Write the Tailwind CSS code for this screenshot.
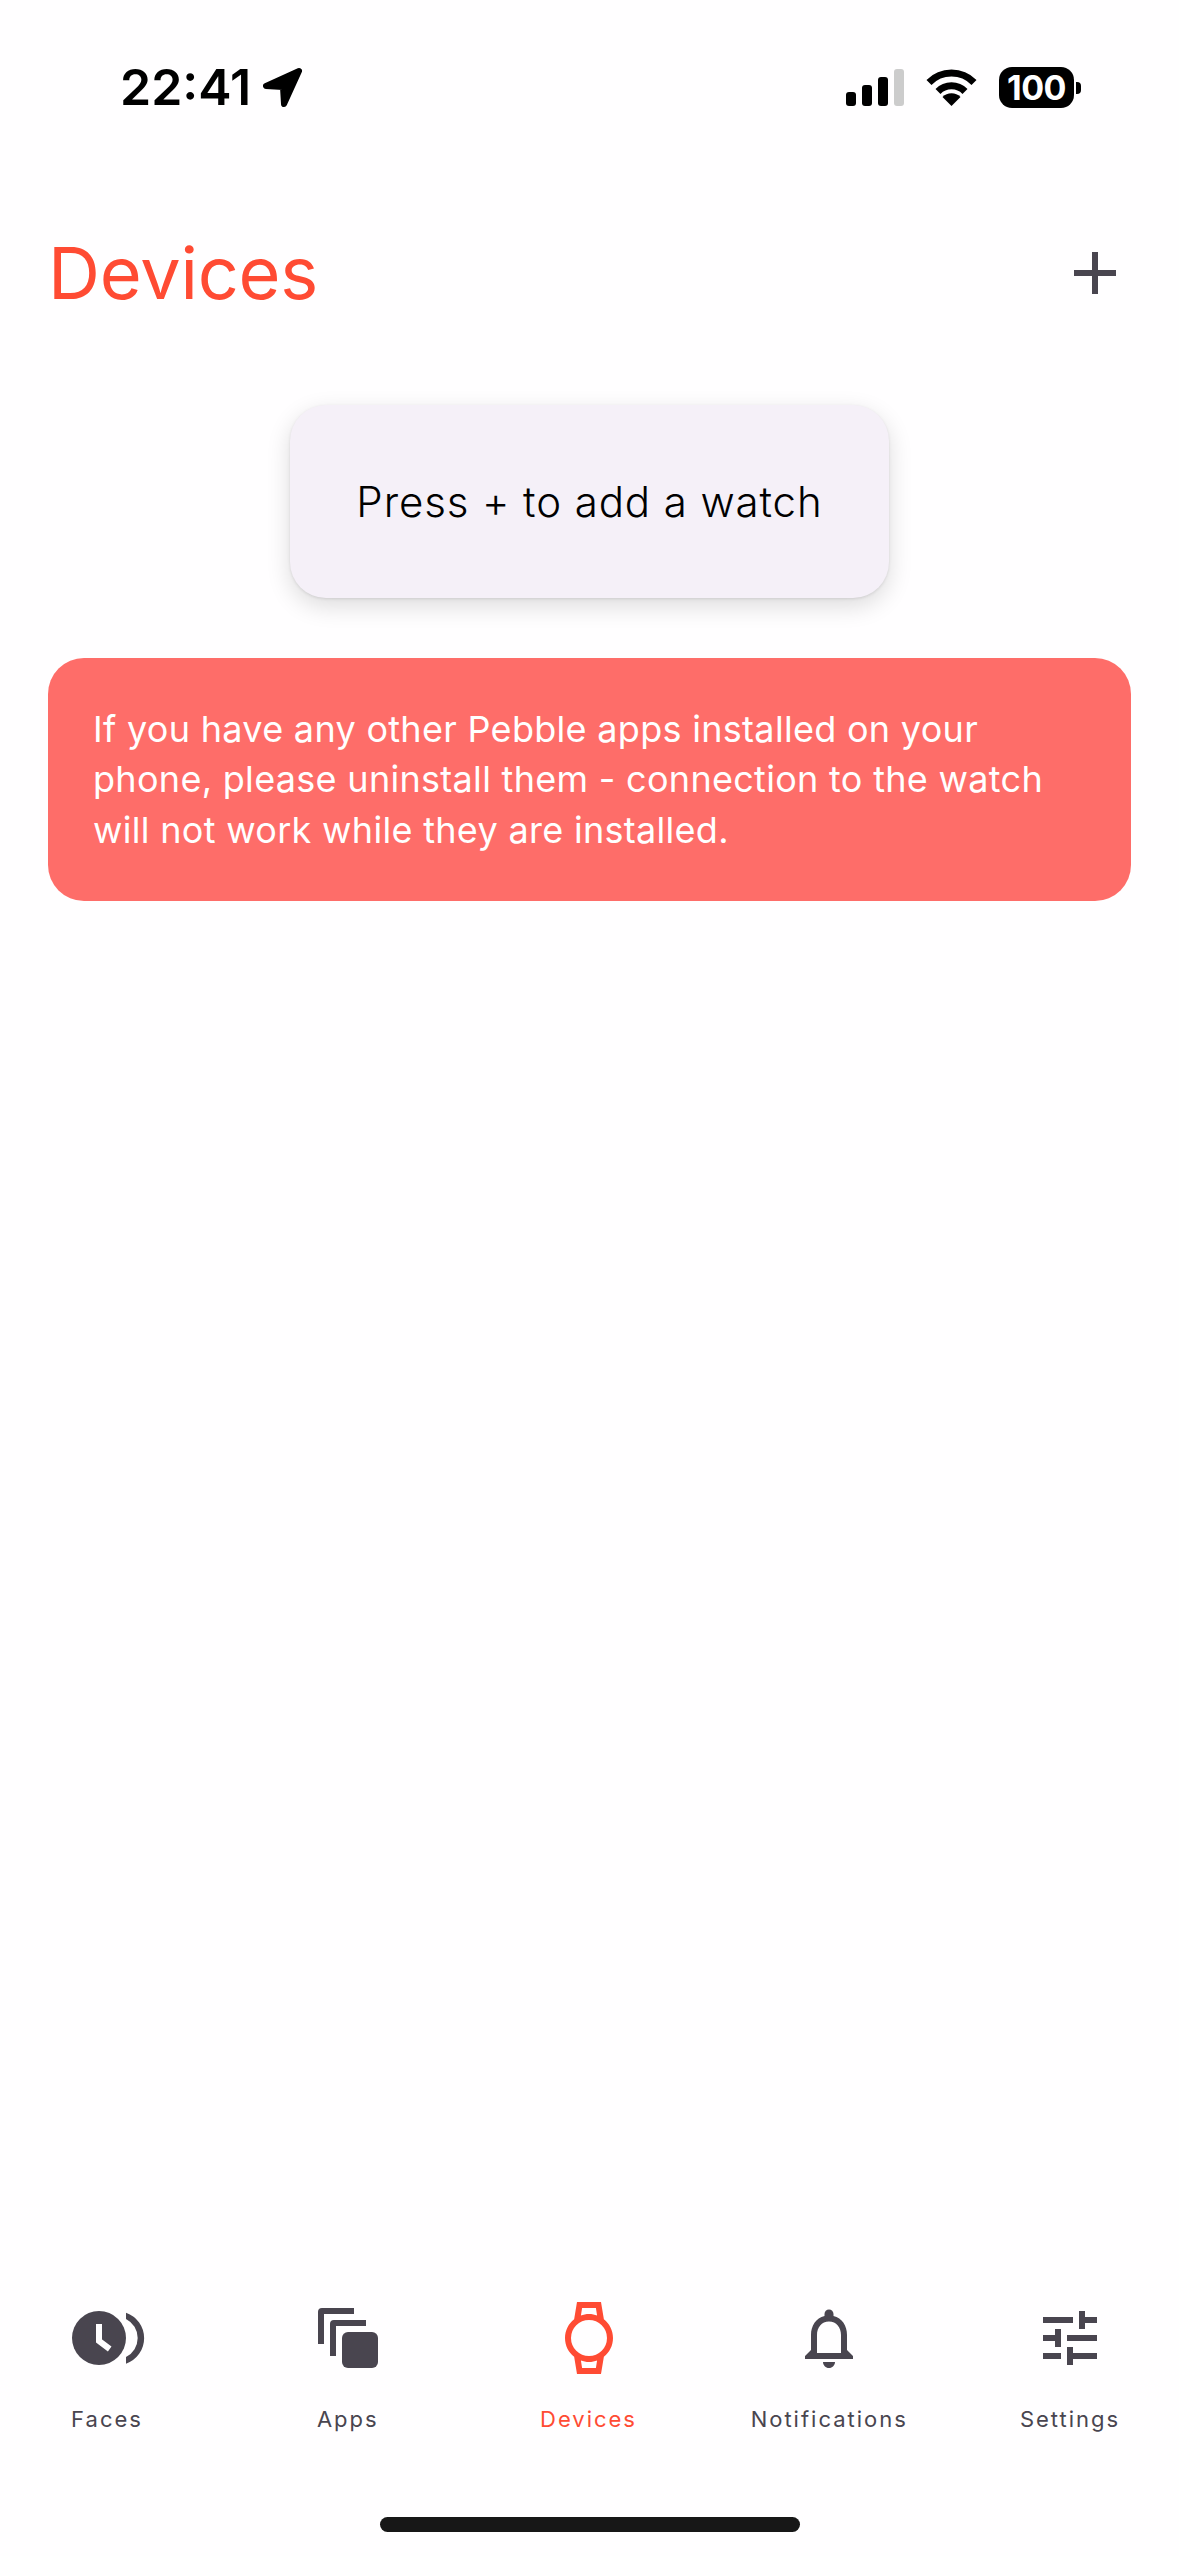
<!DOCTYPE html>
<html lang="en">
<head>
    <meta charset="UTF-8">
    <meta name="viewport" content="width=device-width, initial-scale=1.0">
    <title>Devices</title>
    <script src="https://cdn.jsdelivr.net/npm/@tailwindcss/browser@4"></script>
</head>
<body class="bg-white">
    <div class="w-[1179px] h-[2556px] flex flex-col overflow-hidden bg-[#fffeff] font-[Inter,sans-serif]">
        <!-- status bar -->
        <div class="h-[41px] mt-[67px] flex items-center pl-[120px] pr-[98px] shrink-0">
            <span class="text-[50px] leading-[41px] font-semibold text-black">22:41</span>
            <svg class="ml-[12px] w-[42px] h-[42px]" viewBox="0 0 42 42" fill="#000" stroke="#000" stroke-width="6" stroke-linejoin="round"><path d="M36 4 3 19l17 1 1 17z"/></svg>
            <div class="ml-auto flex items-end gap-[6px] h-[37px]">
                <span class="w-[10px] h-[14px] rounded-[3px] bg-black"></span>
                <span class="w-[10px] h-[21px] rounded-[3px] bg-black"></span>
                <span class="w-[10px] h-[29px] rounded-[3px] bg-black"></span>
                <span class="w-[10px] h-[37px] rounded-[3px] bg-[#cccccc]"></span>
            </div>
            <svg class="ml-[22px] w-[51px] h-[37px]" viewBox="0 0 51 37" fill="none" stroke="#000" stroke-width="7">
                <path d="M3 13.500a31.500 31.500 0 0 1 45 0"/>
                <path d="M12 22.500a19 19 0 0 1 27 0"/>
                <path d="M25.500 37 16.500 28a12.700 12.700 0 0 1 18 0z" fill="#000" stroke="none"/>
            </svg>
            <div class="ml-[22px] w-[75px] h-[41px] rounded-[13px] bg-black text-white text-[34px] leading-[41px] font-bold text-center tracking-[-0.5px]">100</div>
            <span class="ml-[2px] w-[5px] h-[12px] rounded-r-[4px] bg-black"></span>
        </div>

        <!-- header -->
        <div class="mt-[117px] h-[96px] flex items-center justify-between pl-[48px] pr-[63px] shrink-0">
            <h1 class="text-[72px] leading-[96px] font-normal tracking-[-0.2px] text-[#ff4b33]">Devices</h1>
            <svg class="w-[42px] h-[42px]" viewBox="0 0 42 42" fill="#49454f"><path d="M18 0h6v18h18v6H24v18h-6V24H0v-6h18z"/></svg>
        </div>

        <!-- hint card -->
        <div class="mt-[84px] self-center w-[599px] h-[193px] flex items-center justify-center rounded-[36px] bg-[#f5f0f8] shadow-[0_8px_24px_rgba(0,0,0,0.14),0_1px_3px_rgba(0,0,0,0.1)]">
            <p class="text-[42px] leading-[60px] font-light tracking-[0.9px] text-black">Press + to add a watch</p>
        </div>

        <!-- warning -->
        <div class="mt-[60px] mx-[48px] h-[243px] flex items-center rounded-[36px] bg-[#fe6d69] px-[45px] shrink-0">
            <p class="text-[36px] leading-[50.400px] tracking-[0.3px] text-white">If you have any other Pebble apps installed on your<br>phone, please uninstall them - connection to the watch<br>will not work while they are installed.</p>
        </div>

        <!-- tab bar -->
        <nav class="mt-auto flex justify-between pr-[2px] text-[#49454f] text-[22px] leading-[30px] tracking-[2px] shrink-0">
            <a class="w-[214px] flex flex-col items-center">
                <svg class="w-[72px] h-[72px] overflow-visible" viewBox="0 0 72 72" fill="#49454f">
                    <circle cx="28" cy="36" r="27"/>
                    <path d="M28 22v17l10.700 8" fill="none" stroke="#fffeff" stroke-width="6"/>
                    <path d="M55 10.700A27 27 0 0 1 55 61.700V55A21.300 21.300 0 0 0 55 17z"/>
                </svg>
                <span class="mt-[30px]">Faces</span>
            </a>
            <a class="w-[214px] flex flex-col items-center">
                <svg class="w-[72px] h-[72px]" viewBox="0 0 72 72" fill="#49454f">
                    <path d="M42 6H10a4 4 0 0 0-4 4v32h6V12h30z"/>
                    <path d="M54 18H22a4 4 0 0 0-4 4v32h6V24h30z"/>
                    <rect x="30" y="30" width="36" height="36" rx="6"/>
                </svg>
                <span class="mt-[30px]">Apps</span>
            </a>
            <a class="w-[214px] flex flex-col items-center text-[#ff4b33]">
                <svg class="w-[72px] h-[72px]" viewBox="0 0 24 24" fill="#ff4b33" fill-rule="evenodd">
                    <path d="M20 12c0-2.540-1.190-4.810-3.040-6.270L16 0H8l-.950 5.730C5.190 7.190 4 9.450 4 12s1.190 4.810 3.050 6.270L8 24h8l.960-5.730C18.810 16.810 20 14.540 20 12zM18 12a6 6 0 1 1-12 0 6 6 0 0 1 12 0zM9.700 2h4.600l.400 2.500C13.900 4.200 13 4 12 4s-1.900.200-2.700.500zM9.700 22h4.600l.400-2.500c-.800.300-1.700.500-2.700.500s-1.900-.200-2.700-.500z"/>
                </svg>
                <span class="mt-[30px]">Devices</span>
            </a>
            <a class="w-[214px] flex flex-col items-center">
                <svg class="w-[72px] h-[72px]" viewBox="0 0 24 24" fill="#49454f">
                    <path d="M12 22c1.100 0 2-.900 2-2h-4c0 1.100.900 2 2 2zm6-6v-5c0-3.070-1.630-5.640-4.500-6.320V4c0-.830-.670-1.500-1.500-1.500s-1.500.670-1.500 1.500v.680C7.640 5.360 6 7.920 6 11v5l-2 2v1h16v-1l-2-2zm-2 1H8v-6c0-2.480 1.510-4.500 4-4.500s4 2.020 4 4.500v6z"/>
                </svg>
                <span class="mt-[30px]">Notifications</span>
            </a>
            <a class="w-[214px] flex flex-col items-center">
                <svg class="w-[72px] h-[72px]" viewBox="0 0 24 24" fill="#49454f">
                    <path d="M3 17v2h6v-2H3zM3 5v2h10V5H3zm10 16v-2h8v-2h-8v-2h-2v6h2zM7 9v2H3v2h4v2h2V9H7zm14 4v-2H11v2h10zm-6-4h2V7h4V5h-4V3h-2v6z"/>
                </svg>
                <span class="mt-[30px]">Settings</span>
            </a>
        </nav>

        <!-- home indicator -->
        <div class="mt-[83px] mb-[24px] self-center w-[420px] h-[15px] rounded-full bg-[#171717] shrink-0"></div>
    </div>
</body>
</html>
